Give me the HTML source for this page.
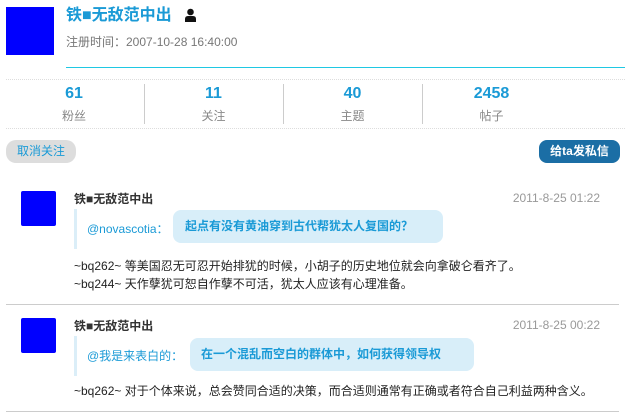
<!DOCTYPE html>
<html><head><meta charset="utf-8"><style>
*{margin:0;padding:0;box-sizing:border-box}
body{width:625px;height:413px;background:#fff;font-family:"Liberation Sans","Noto Sans CJK SC",sans-serif;position:relative;overflow:hidden}
.a{position:absolute;white-space:nowrap}
.blue{color:#1a9ad6}
.av{background:#0000ff;border-radius:2px}
</style></head><body>
<div class="a" style="left:6px;top:7px;width:48px;height:48px;background:#0000ff"></div>
<div class="a blue" style="left:66px;top:6px;font-size:16px;font-weight:bold;line-height:20px">铁■无敌范中出</div>
<svg class="a" style="left:184px;top:8px" width="13" height="14" viewBox="0 0 13 14"><circle cx="6.5" cy="4" r="3.3" fill="#111"/><path d="M1 14 V11 Q1 8 4 8 H9 Q12 8 12 11 V14Z" fill="#111"/></svg>
<div class="a" style="left:66px;top:35px;font-size:12px;color:#777;line-height:14px">注册时间：2007-10-28 16:40:00</div>
<div class="a" style="left:66px;top:67px;width:559px;height:1px;background:#1fc8e3"></div>
<div class="a" style="left:6px;top:79px;width:619px;border-top:1px dotted #ddd"></div>
<div class="a" style="left:6px;top:128px;width:619px;border-top:1px dotted #ddd"></div>
<div class="a" style="left:144px;top:84px;width:1px;height:40px;background:#ccc"></div>
<div class="a" style="left:283px;top:84px;width:1px;height:40px;background:#ccc"></div>
<div class="a" style="left:422px;top:84px;width:1px;height:40px;background:#ccc"></div>
<div class="a" style="left:4px;top:84px;width:140px;text-align:center"><div class="blue" style="font-size:16px;font-weight:bold;line-height:20px">61</div><div style="font-size:12px;color:#888;margin-top:3px">粉丝</div></div>
<div class="a" style="left:144px;top:84px;width:139px;text-align:center"><div class="blue" style="font-size:16px;font-weight:bold;line-height:20px">11</div><div style="font-size:12px;color:#888;margin-top:3px">关注</div></div>
<div class="a" style="left:283px;top:84px;width:139px;text-align:center"><div class="blue" style="font-size:16px;font-weight:bold;line-height:20px">40</div><div style="font-size:12px;color:#888;margin-top:3px">主题</div></div>
<div class="a" style="left:422px;top:84px;width:139px;text-align:center"><div class="blue" style="font-size:16px;font-weight:bold;line-height:20px">2458</div><div style="font-size:12px;color:#888;margin-top:3px">帖子</div></div>
<div class="a blue" style="left:6px;top:140px;width:70px;height:23px;background:#ddd;border-radius:10px;font-size:12px;line-height:23px;text-align:center">取消关注</div>
<div class="a" style="left:539px;top:140px;width:81px;height:23px;background:#1b6ea5;border-radius:8px;font-size:12px;font-weight:bold;color:#fff;line-height:23px;text-align:center">给ta发私信</div>

<div class="a av" style="left:21px;top:191px;width:35px;height:35px"></div>
<div class="a" style="left:74px;top:190px;font-size:12px;font-weight:bold;color:#333">铁■无敌范中出</div>
<div class="a" style="left:510px;top:191px;font-size:12px;color:#999;width:90px;text-align:right">2011-8-25 01:22</div>
<div class="a" style="left:74px;top:209px;width:3px;height:40px;background:#dbeef8"></div>
<div class="a blue" style="left:87px;top:220px;font-size:12px">@novascotia：</div>
<div class="a blue" style="left:173px;top:210px;width:270px;height:33px;background:#d8eef9;border-radius:8px;font-size:12px;font-weight:bold;line-height:33px;padding-left:12px">起点有没有黄油穿到古代帮犹太人复国的？</div>
<div class="a" style="left:74px;top:257px;font-size:12px;color:#222;line-height:18px">~bq262~ 等美国忍无可忍开始排犹的时候，小胡子的历史地位就会向拿破仑看齐了。<br>~bq244~ 天作孽犹可恕自作孽不可活，犹太人应该有心理准备。</div>
<div class="a" style="left:6px;top:304px;width:613px;height:1px;background:#ccc"></div>

<div class="a av" style="left:21px;top:318px;width:35px;height:35px"></div>
<div class="a" style="left:74px;top:317px;font-size:12px;font-weight:bold;color:#333">铁■无敌范中出</div>
<div class="a" style="left:510px;top:318px;font-size:12px;color:#999;width:90px;text-align:right">2011-8-25 00:22</div>
<div class="a" style="left:74px;top:336px;width:3px;height:40px;background:#dbeef8"></div>
<div class="a blue" style="left:87px;top:347px;font-size:12px">@我是来表白的：</div>
<div class="a blue" style="left:190px;top:338px;width:284px;height:33px;background:#d8eef9;border-radius:8px;font-size:12px;font-weight:bold;line-height:33px;padding-left:11px">在一个混乱而空白的群体中，如何获得领导权</div>
<div class="a" style="left:74px;top:382px;font-size:12px;color:#222;line-height:18px">~bq262~ 对于个体来说，总会赞同合适的决策，而合适则通常有正确或者符合自己利益两种含义。</div>
<div class="a" style="left:6px;top:411px;width:613px;height:1px;background:#ccc"></div>
</body></html>
